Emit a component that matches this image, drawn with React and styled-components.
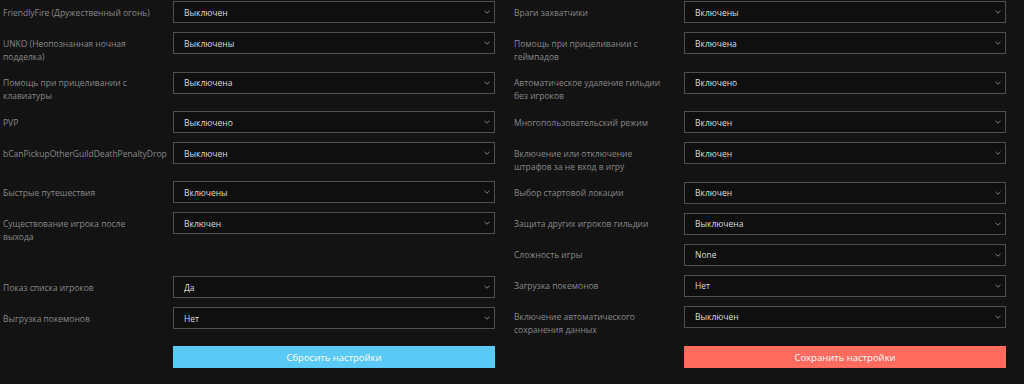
import React from "react";
import styled, { createGlobalStyle } from "styled-components";

const Global = createGlobalStyle`
  html, body { margin: 0; padding: 0; background: #131313; }
  body { font-family: "Open Sans", "Noto Sans", sans-serif; }
  * { box-sizing: border-box; }
`;

const Page = styled.div`
  width: 1024px;
  height: 384px;
  padding: 1px 18px 0 3px;
  background: #131313;
  overflow: hidden;
`;

const Columns = styled.div`
  display: grid;
  grid-template-columns: 492px 492px;
  column-gap: 19px;
  align-items: start;
`;

const Column = styled.div`
  display: flex;
  flex-direction: column;
  gap: 9px;
`;

const Item = styled.div`
  display: flex;
  align-items: flex-start;
  min-height: ${(p) => (p.$tall ? "30px" : "22px")};
`;

const Label = styled.div`
  flex: 0 0 170px;
  width: 170px;
  min-width: 0;
  padding: 4.5px 15px 0 0;
  font-size: 8.5px;
  line-height: 13px;
  color: #888888;
`;

const SelectWrap = styled.div`
  position: relative;
  flex: 1 1 auto;
  height: 22px;
`;

const Select = styled.select`
  display: block;
  appearance: none;
  -webkit-appearance: none;
  width: 100%;
  height: 22px;
  margin: 0;
  padding: 0 20px 0 10px;
  background: #0f0f0f;
  border: 1px solid #4f4f4f;
  border-radius: 0;
  color: #dcdcdc;
  font-family: "Open Sans", "Noto Sans", sans-serif;
  font-size: 8.5px;
  outline: none;
`;

const Chevron = styled.svg`
  position: absolute;
  right: 5px;
  top: 9px;
  width: 6px;
  height: 4px;
  pointer-events: none;
`;

const Spacer = styled.div`
  height: 15.5px;
`;

const Buttons = styled.div`
  display: grid;
  grid-template-columns: 492px 492px;
  column-gap: 19px;
  margin-top: 10px;
`;

const ButtonCell = styled.div`
  padding-left: 170px;
`;

const Button = styled.button`
  display: block;
  width: 100%;
  height: 22px;
  border: 0;
  margin: 0;
  padding: 0;
  background: ${(p) => p.$bg};
  color: #ffffff;
  font-family: "Open Sans", "Noto Sans", sans-serif;
  font-size: 9.5px;
  cursor: pointer;
`;

function Field({ label, value, tall }) {
  return (
    <Item $tall={tall}>
      <Label>{label}</Label>
      <SelectWrap>
        <Select defaultValue={value}>
          <option value={value}>{value}</option>
        </Select>
        <Chevron viewBox="0 0 6 4">
          <path d="M0.5 0.8 L3 3.2 L5.5 0.8" fill="none" stroke="#8a8a8a" strokeWidth="0.9" />
        </Chevron>
      </SelectWrap>
    </Item>
  );
}

const left = [
  ["FriendlyFire (Дружественный огонь)", "Выключен"],
  ["UNKO (Неопознанная ночная подделка)", "Выключены"],
  ["Помощь при прицеливании с клавиатуры", "Выключена"],
  ["PVP", "Выключено"],
  ["bCanPickupOtherGuildDeathPenaltyDrop", "Выключен", true],
  ["Быстрые путешествия", "Включены"],
  ["Существование игрока после выхода", "Включен"],
  null,
  ["Показ списка игроков", "Да"],
  ["Выгрузка покемонов", "Нет"],
];

const right = [
  ["Враги захватчики", "Включены"],
  ["Помощь при прицеливании с геймпадов", "Включена"],
  ["Автоматическое удаление гильдии без игроков", "Включено"],
  ["Многопользовательский режим", "Включен"],
  ["Включение или отключение штрафов за не вход в игру", "Включен"],
  ["Выбор стартовой локации", "Включен"],
  ["Защита других игроков гильдии", "Выключена"],
  ["Сложность игры", "None"],
  ["Загрузка покемонов", "Нет"],
  ["Включение автоматического сохранения данных", "Выключен"],
];

export default function App() {
  return (
    <>
      <Global />
      <Page>
        <Columns>
          <Column>
            {left.map((f, i) =>
              f ? <Field key={i} label={f[0]} value={f[1]} tall={f[2]} /> : <Spacer key={i} />
            )}
          </Column>
          <Column>
            {right.map((f, i) => (
              <Field key={i} label={f[0]} value={f[1]} />
            ))}
          </Column>
        </Columns>
        <Buttons>
          <ButtonCell>
            <Button $bg="#5bc9f5">Сбросить настройки</Button>
          </ButtonCell>
          <ButtonCell>
            <Button $bg="#ff6b5e">Сохранить настройки</Button>
          </ButtonCell>
        </Buttons>
      </Page>
    </>
  );
}
